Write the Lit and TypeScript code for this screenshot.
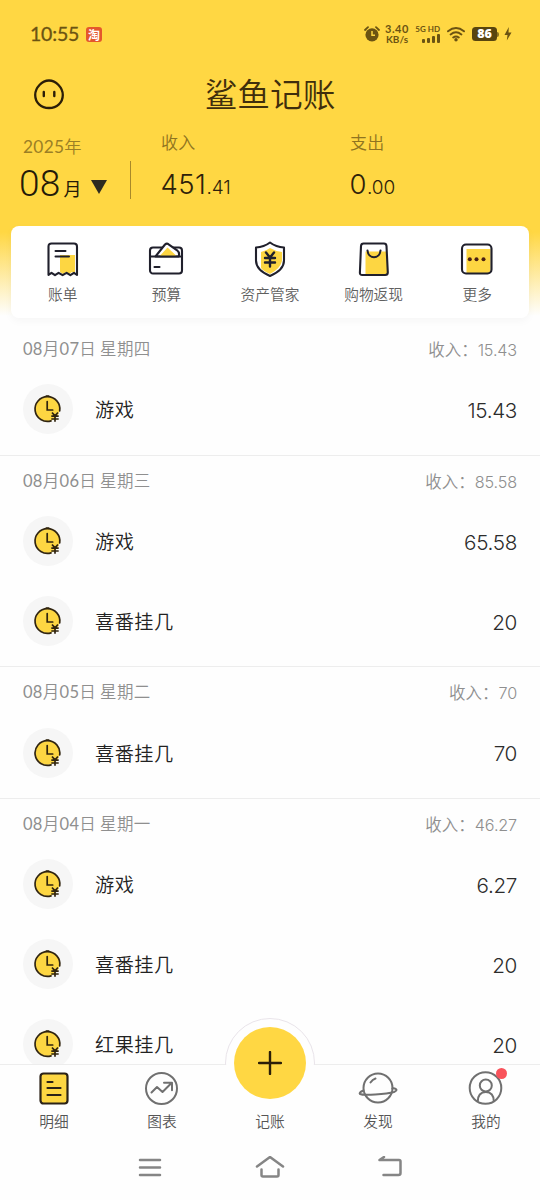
import { LitElement, html, svg, css } from "lit";
import { customElement, property } from "lit/decorators.js";

interface Entry { name: string; amount: string; }
interface Day { date: string; total: string; entries: Entry[]; }

const DAYS: Day[] = [
  { date: "08月07日 星期四", total: "15.43", entries: [{ name: "游戏", amount: "15.43" }] },
  { date: "08月06日 星期三", total: "85.58", entries: [{ name: "游戏", amount: "65.58" }, { name: "喜番挂几", amount: "20" }] },
  { date: "08月05日 星期二", total: "70", entries: [{ name: "喜番挂几", amount: "70" }] },
  { date: "08月04日 星期一", total: "46.27", entries: [{ name: "游戏", amount: "6.27" }, { name: "喜番挂几", amount: "20" }, { name: "红果挂几", amount: "20" }] },
];

const INK = "#20202c";
const Y = "#fdd642";
const G = "#707070";

const icons: Record<string, unknown> = {
  bill: svg`<path d="M15 14h15v19l-3-2-3 2-3-2-3 2-3-2z" fill=${Y}/><path d="M3.500 34V5.500q0-3 3-3h22.500q3 0 3 3V34l-3-2.200-3.600 2.400-3.800-2.400-4 2.400-4-2.400-3.600 2.400-3.500-2.400z" fill="none" stroke=${INK} stroke-width="2.100" stroke-linejoin="round"/><path d="M10.500 10h10M10.500 15.500h13.500" stroke=${INK} stroke-width="2" stroke-linecap="round"/>`,
  budget: svg`<rect x="2" y="6.500" width="32" height="26" rx="3" fill="#fff" stroke=${INK} stroke-width="2.100"/><path d="M7.500 15.500L17 3.500q1.800-1.800 3.600-.2l8.500 6q3 2.500 1.500 6.200z" fill="#fff" stroke=${INK} stroke-width="2.100" stroke-linejoin="round"/><path d="M11.500 15.300l8-8.800 9.500 8.800z" fill=${Y}/><path d="M2 15.500h32M6.500 26h5" stroke=${INK} stroke-width="2.100" stroke-linecap="round"/>`,
  shield: svg`<path d="M9 11q6-1.500 9-4 5 3 12 4v9Q28 28 18 33 11 30 9 27z" fill=${Y}/><path d="M18 1.500q6 4.500 14 5v13q0 9.500-14 15.500Q4 29 4 19.500v-13q8-.5 14-5z" fill="none" stroke=${INK} stroke-width="2.100" stroke-linejoin="round"/><path d="M14 11.500l4 5 4-5M13 17h10M13 21.500h10M18 16.500v9" fill="none" stroke=${INK} stroke-width="2.400" stroke-linecap="round"/>`,
  bag: svg`<path d="M9.500 10.500h21l1 23h-22z" fill=${Y}/><path d="M7.500 2.500h20.500q2.300 0 2.500 2.500l1.300 26.500q0 2.500-2.600 2.500H6.300q-2.600 0-2.400-2.500L5 5Q5.200 2.500 7.500 2.500z" fill="none" stroke=${INK} stroke-width="2.100"/><path d="M11.500 9.500c1 9 12 9 13 0" fill="none" stroke=${INK} stroke-width="2.100" stroke-linecap="round"/>`,
  more: svg`<rect x="7.500" y="8" width="24" height="24" fill=${Y}/><rect x="3" y="3.500" width="29.500" height="29" rx="4" fill="none" stroke=${INK} stroke-width="2.100"/><g fill="#4a2015"><circle cx="10.800" cy="18.200" r="2"/><circle cx="17.500" cy="18.200" r="2"/><circle cx="24.500" cy="18.200" r="2"/></g>`,
  list: svg`<rect x="4.500" y="3.500" width="27" height="30" rx="3" fill=${Y} stroke="#2b2217" stroke-width="2.200"/><path d="M11.500 12h5M11.500 18h13M11.500 25h13" stroke="#2b2217" stroke-width="2.200" stroke-linecap="round"/>`,
  chart: svg`<circle cx="17.500" cy="18.500" r="15.500" fill="none" stroke=${G} stroke-width="2"/><path d="M7.500 22.500l5.500-5.500 5.500 5 8.500-8.500M20 12.800h8v7.500" fill="none" stroke=${G} stroke-width="2" stroke-linecap="round" stroke-linejoin="round"/>`,
  planet: svg`<circle cx="18" cy="18" r="14.500" fill="none" stroke=${G} stroke-width="2"/><path d="M10.500 12.500q2-3 5-4" fill="none" stroke=${G} stroke-width="2" stroke-linecap="round"/><path d="M3.500 20.500q-5 2-3.500 3.500c3 1.500 26 .5 34-2q4-1.600 1.600-3.200-1.500-.8-3.300-.3" fill="none" stroke=${G} stroke-width="2" stroke-linecap="round"/>`,
  person: svg`<circle cx="17.500" cy="18" r="15.800" fill="none" stroke=${G} stroke-width="2"/><circle cx="17.800" cy="15.500" r="6" fill="none" stroke=${G} stroke-width="2"/><path d="M9.800 31.500q0-9.500 8-9.500t8 9.500" fill="none" stroke=${G} stroke-width="2"/>`,
  clock: svg`<circle cx="17.500" cy="18" r="12" fill=${Y}/><path d="M29.700 19.800A12.400 12.400 0 1 0 21 29.900" fill="none" stroke="#30240f" stroke-width="1.700" stroke-linecap="round"/><path d="M16.300 5h2.400M17.200 10.500v8.500h5.500" fill="none" stroke="#30240f" stroke-width="1.700" stroke-linecap="round"/><path d="M22 21.500l3 3.400 3-3.400M21.300 25.200h7.400M21.300 28h7.400M25 25v5.800" fill="none" stroke="#30240f" stroke-width="1.700"/>`,
};

@customElement("ui-icon")
class UiIcon extends LitElement {
  static styles = css`:host { display: block; width: 36px; height: 36px; } svg { display: block; width: 36px; height: 36px; overflow: visible; }`;
  @property() name = "";
  render() { return html`<svg viewBox="0 0 36 36">${icons[this.name]}</svg>`; }
}

@customElement("status-bar")
class StatusBar extends LitElement {
  static styles = css`
    :host { display: flex; align-items: center; height: 68px; padding: 0 28px 0 30px; color: #6b5312; }
    .time { font: 400 19.500px/24px Lato, sans-serif; letter-spacing: -.2px; width: 56px; margin-top: -1px; -webkit-text-stroke: .3px #6b5312; }
    .app { width: 16px; height: 15px; border-radius: 3px; background: #e4572c; color: #fff; font: 700 12px/15px "Noto Sans CJK SC", sans-serif; text-align: center; overflow: hidden; }
    .gap { flex: 1; }
    .speed { display: flex; flex-direction: column; align-items: center; width: 26px; margin-left: 4px; white-space: nowrap; }
    .speed b { font: 700 11px/10px Lato, sans-serif; letter-spacing: .6px; }
    .speed i { font: normal 700 10px/10px Lato, sans-serif; }
    .net { display: flex; flex-direction: column; align-items: flex-end; width: 26px; margin-left: 4px; font: 700 8px/9px Lato, sans-serif; white-space: nowrap; }
    svg { display: block; }
    .wifi { margin-left: 6px; }
    .batt { margin-left: 6px; display: flex; align-items: center; }
    .cell { width: 25px; height: 14px; border-radius: 3.500px; background: #59450e; color: #fff; font: 800 12.500px/14px "Open Sans", sans-serif; text-align: center; }
    .tip { width: 2px; height: 5px; border-radius: 0 2px 2px 0; background: #8d7420; }
    .bolt { margin-left: 5px; }
  `;
  render() {
    return html`
      <div class="time">10:55</div><div class="app">淘</div><div class="gap"></div>
      <svg width="16" height="16" viewBox="0 0 16 16"><circle cx="8" cy="8.800" r="6.600" fill="#6b5312"/><path d="M1 4l3-2.800M15 4l-3-2.800" stroke="#6b5312" stroke-width="1.800" stroke-linecap="round"/><path d="M8 5v4.300h3" fill="none" stroke=${Y} stroke-width="1.500"/></svg>
      <div class="speed"><b>3.40</b><i>KB/s</i></div>
      <div class="net">5G HD<svg width="18" height="9" viewBox="0 0 18 9" fill="#6b5312"><rect y="5" width="3" height="4" rx="1"/><rect x="5" y="4" width="3" height="5" rx="1"/><rect x="10" y="2" width="3" height="7" rx="1"/><rect x="15" y="0" width="3" height="9" rx="1"/></svg></div>
      <svg class="wifi" width="20" height="16" viewBox="0 0 20 16" fill="none" stroke="#6b5312" stroke-width="1.900" stroke-linecap="round"><path d="M2 5.300q8-6.500 16 0M4.600 8.500q5.400-4.300 10.800 0M7.200 11.500q2.800-2.200 5.600 0"/><circle cx="10" cy="13.800" r=".8" fill="#6b5312"/></svg>
      <div class="batt"><div class="cell">86</div><div class="tip"></div></div>
      <svg class="bolt" width="8" height="14" viewBox="0 0 8 14"><path d="M4.800 0L.5 8h3L2.800 13.500 7.500 5.500h-3z" fill="#6b5312"/></svg>`;
  }
}

@customElement("day-group")
class DayGroup extends LitElement {
  static styles = css`
    :host { display: block; padding-bottom: 4.700px; border-bottom: 1px solid #ededed; }
    .head { display: flex; justify-content: space-between; height: 46px; padding: 0 23px; color: #8f8f8f; }
    .date { font: 350 16.500px/48px "Noto Sans CJK SC", sans-serif; letter-spacing: .3px; white-space: pre; }
    .date b { font-family: Lato, sans-serif; font-weight: 400; }
    .sum { font: 350 16.500px/51px "Noto Sans CJK SC", sans-serif; }
    .sum span { font: 300 16.200px/51px Inter, sans-serif; letter-spacing: -.15px; }
    .row { display: flex; align-items: center; height: 80px; padding: 0 23px; }
    .disc { width: 50px; height: 50px; border-radius: 50%; background: #f6f6f6; display: grid; place-items: center; margin-top: -1px; }
    .name { flex: 1; margin-left: 22px; font: 350 19.200px/28px "Noto Sans CJK SC", sans-serif; color: #222; letter-spacing: .45px; margin-top: -1px; }
    .amt { font: 300 20.700px/28px Inter, sans-serif; color: #2c2c2c; letter-spacing: -.35px; padding-top: 2px; }
  `;
  @property({ attribute: false }) day!: Day;
  render() {
    const parts = this.day.date.split(/(\d+)/).map((p) => (/^\d/.test(p) ? html`<b>${p}</b>` : p));
    return html`
      <div class="head"><div class="date">${parts}</div><div class="sum">收入：<span>${this.day.total}</span></div></div>
      ${this.day.entries.map((e) => html`<div class="row"><div class="disc"><ui-icon name="clock"></ui-icon></div><div class="name">${e.name}</div><div class="amt">${e.amount}</div></div>`)}`;
  }
}

@customElement("app-root")
class AppRoot extends LitElement {
  static styles = css`
    :host { display: flex; flex-direction: column; width: 540px; height: 1200px; overflow: hidden; background: #fefefe; font-family: "Noto Sans CJK SC", sans-serif; }
    .top { flex: none; height: 323.900px; background: linear-gradient(#ffd743 0, #ffd743 232px, #fefefe 316px); }
    .brand { display: grid; grid-template-columns: 1fr auto 1fr; align-items: center; height: 54px; padding: 0 34px; }
    .brand svg { display: block; margin: -2px 0 0 -1px; }
    .logo { font: 350 32.700px/54px "Noto Sans CJK SC", sans-serif; color: #3f2e0c; margin-top: -4px; }
    .stats { display: flex; height: 104px; }
    .month { width: 107px; padding: 10px 0 0 23px; }
    .year { font: 350 17.300px/28px "Noto Sans CJK SC", sans-serif; color: #9b7f25; letter-spacing: .3px; }
    .year b { font-family: Lato, sans-serif; font-weight: 400; }
    .pick { display: flex; align-items: baseline; margin-left: -4px; color: #241a08; font: 350 37px/46px Roboto, sans-serif; letter-spacing: .2px; }
    .pick small { font: 400 18px/30px "Noto Sans CJK SC", sans-serif; margin-left: 3px; }
    .pick svg { margin-left: 9px; position: relative; top: -1px; }
    .rule { width: 1px; height: 38px; margin-top: 39px; background: #a8892a; }
    .stat { width: 189px; padding: 6px 0 0 30px; box-sizing: border-box; }
    .label { font: 350 17px/28px "Noto Sans CJK SC", sans-serif; color: #8f7420; letter-spacing: .3px; }
    .value { font: 300 27.500px/56px Inter, sans-serif; color: #2e210a; letter-spacing: .5px; margin-left: -.5px; }
    .value small { font-size: 19px; letter-spacing: -.1px; }
    .card { display: flex; height: 92px; margin: 0 11px; background: #fff; border-radius: 8px; box-shadow: 0 3px 8px rgba(0,0,0,.035); }
    .tool { flex: 1; display: flex; flex-direction: column; align-items: center; padding-top: 15px; font-size: 14.700px; font-weight: 350; line-height: 26px; color: #5f5f5f; gap: 4px; }
    .list { flex: none; height: 740.100px; overflow: hidden; }
    .tabs { flex: none; display: flex; height: 72px; border-top: 1px solid #ededed; background: #fefefe; position: relative; }
    .tab { flex: 1; display: flex; flex-direction: column; align-items: center; padding-top: 5px; gap: 2px; font-size: 14.700px; font-weight: 350; line-height: 26px; color: #555; position: relative; }
    .add { position: absolute; top: -47px; left: 9px; width: 88px; height: 88px; border-radius: 50%; border: 1px solid #e9e4ea; clip-path: inset(0 0 43px 0); background: #fefefe; box-sizing: content-box; }
    .plus { position: absolute; top: -38px; left: 18px; width: 72px; height: 72px; border-radius: 50%; background: #ffd743; display: grid; place-items: center; }
    .mid { padding-top: 43px; }
    .dot { position: absolute; left: 64px; top: 3px; width: 11px; height: 11px; border-radius: 50%; background: #f9535b; }
    .nav { flex: none; height: 63px; display: flex; justify-content: center; align-items: center; gap: 90px; }
    .nav svg { display: block; fill: none; stroke: #858585; stroke-width: 2.500; stroke-linecap: round; stroke-linejoin: round; }
  `;
  render() {
    const tools = [["bill", "账单"], ["budget", "预算"], ["shield", "资产管家"], ["bag", "购物返现"], ["more", "更多"]];
    return html`
      <div class="top">
        <status-bar></status-bar>
        <div class="brand">
          <svg width="32" height="32" viewBox="0 0 32 32"><path d="M16 2.500C23 2.500 29.800 9.500 29.800 17S24 30 16 30 2.200 24.500 2.200 17 9 2.500 16 2.500z" fill="none" stroke="#2b1e08" stroke-width="2.300"/><path d="M10.800 14v4M21.300 14v4" stroke="#2b1e08" stroke-width="2.400" stroke-linecap="round"/></svg>
          <div class="logo">鲨鱼记账</div>
        </div>
        <div class="stats">
          <div class="month"><div class="year"><b>2025</b>年</div><div class="pick">08<small>月</small><svg width="16" height="15" viewBox="0 0 16 15"><path d="M0 0h16L8 14z" fill="#2e2b20"/></svg></div></div>
          <div class="rule"></div>
          <div class="stat"><div class="label">收入</div><div class="value">451<small>.41</small></div></div>
          <div class="stat"><div class="label">支出</div><div class="value">0<small>.00</small></div></div>
        </div>
        <div class="card">${tools.map(([i, t]) => html`<div class="tool"><ui-icon name=${i}></ui-icon><span>${t}</span></div>`)}</div>
      </div>
      <div class="list">${DAYS.map((d) => html`<day-group .day=${d}></day-group>`)}</div>
      <div class="tabs">
        <div class="tab"><ui-icon name="list"></ui-icon><span>明细</span></div>
        <div class="tab"><ui-icon name="chart"></ui-icon><span>图表</span></div>
        <div class="tab mid"><div class="add"></div><div class="plus"><svg width="24" height="24" viewBox="0 0 24 24"><path d="M12 1v22M1 12h22" stroke="#2b1e08" stroke-width="2.400" stroke-linecap="round"/></svg></div><span>记账</span></div>
        <div class="tab"><ui-icon name="planet"></ui-icon><span>发现</span></div>
        <div class="tab"><ui-icon name="person"></ui-icon><div class="dot"></div><span>我的</span></div>
      </div>
      <div class="nav">
        <svg width="30" height="24" viewBox="0 0 30 24"><path d="M5 4h20M5 11.500h20M5 19h20"/></svg>
        <svg width="30" height="24" viewBox="0 0 30 24"><path d="M2 10.500L15 1l13 9.500M6.500 13.500v5.500q0 1.500 1.500 1.500h14q1.500 0 1.500-1.500v-5.500"/></svg>
        <svg width="30" height="24" viewBox="0 0 30 24"><path d="M9 1L4.500 4H24q1.500 0 1.500 1.500V17q0 2-2 2H8.500"/></svg>
      </div>`;
  }
}
